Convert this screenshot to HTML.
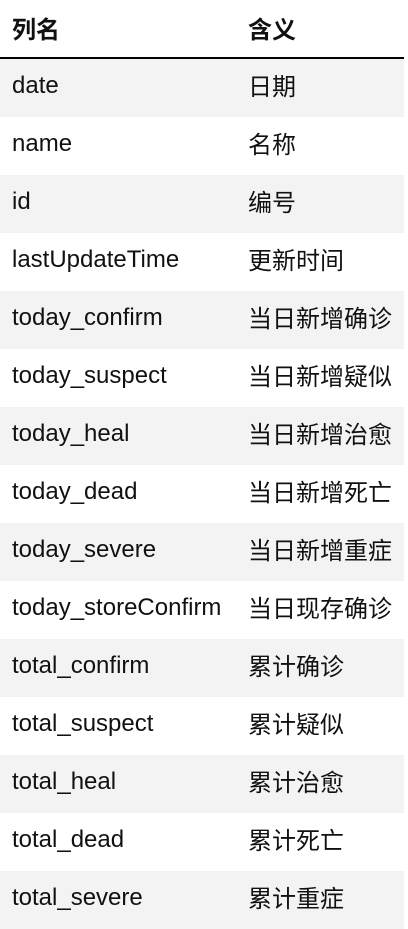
<!DOCTYPE html>
<html><head><meta charset="utf-8"><style>
body{margin:0;background:#fff;color:#111;}
table{border-collapse:collapse;width:404px;}
td,th{height:58px;padding:0;text-align:left;vertical-align:middle;line-height:26px;}
td span{position:relative;}
td:first-child{font-family:"Liberation Sans",sans-serif;font-size:24px;padding-left:12px;width:236px;}
td:first-child span{top:-2px;}
td:last-child{font-family:"Noto Sans CJK SC",sans-serif;font-size:24px;}
td:last-child span{top:-3px;}
th{height:55px;font-family:"Noto Sans CJK SC",sans-serif;font-size:24px;font-weight:bold;border-bottom:2px solid #000;padding-bottom:2px}
th:first-child{padding-left:12px;width:236px;}
tr:nth-child(odd) td{background:#f3f3f3;}
</style></head><body>
<table>
<thead><tr><th>列名</th><th>含义</th></tr></thead>
<tbody>
<tr><td><span>date</span></td><td><span>日期</span></td></tr>
<tr><td><span>name</span></td><td><span>名称</span></td></tr>
<tr><td><span>id</span></td><td><span>编号</span></td></tr>
<tr><td><span>lastUpdateTime</span></td><td><span>更新时间</span></td></tr>
<tr><td><span>today_confirm</span></td><td><span>当日新增确诊</span></td></tr>
<tr><td><span>today_suspect</span></td><td><span>当日新增疑似</span></td></tr>
<tr><td><span>today_heal</span></td><td><span>当日新增治愈</span></td></tr>
<tr><td><span>today_dead</span></td><td><span>当日新增死亡</span></td></tr>
<tr><td><span>today_severe</span></td><td><span>当日新增重症</span></td></tr>
<tr><td><span>today_storeConfirm</span></td><td><span>当日现存确诊</span></td></tr>
<tr><td><span>total_confirm</span></td><td><span>累计确诊</span></td></tr>
<tr><td><span>total_suspect</span></td><td><span>累计疑似</span></td></tr>
<tr><td><span>total_heal</span></td><td><span>累计治愈</span></td></tr>
<tr><td><span>total_dead</span></td><td><span>累计死亡</span></td></tr>
<tr><td><span>total_severe</span></td><td><span>累计重症</span></td></tr>
</tbody></table>
</body></html>
